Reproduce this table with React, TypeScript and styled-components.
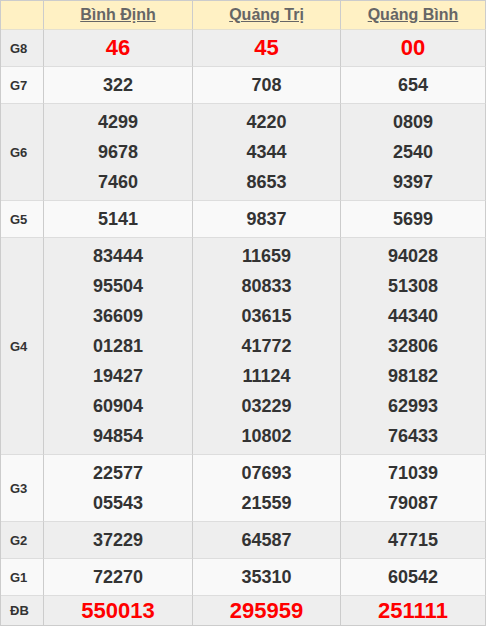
import React from 'react'
import styled, { createGlobalStyle } from 'styled-components'

const GlobalStyle = createGlobalStyle`
	html, body {
		margin: 0;
		padding: 0;
		background: #fff;
		font-family: "Liberation Sans", Arial, sans-serif;
	}
`

interface Prize {
	label: string
	big?: boolean
	last?: boolean
	values: string[][]
}

const provinces = ['Bình Định', 'Quảng Trị', 'Quảng Bình']

const prizes: Prize[] = [
	{ label: 'G8', big: true, values: [['46'], ['45'], ['00']] },
	{ label: 'G7', values: [['322'], ['708'], ['654']] },
	{
		label: 'G6',
		values: [
			['4299', '9678', '7460'],
			['4220', '4344', '8653'],
			['0809', '2540', '9397'],
		],
	},
	{ label: 'G5', values: [['5141'], ['9837'], ['5699']] },
	{
		label: 'G4',
		values: [
			['83444', '95504', '36609', '01281', '19427', '60904', '94854'],
			['11659', '80833', '03615', '41772', '11124', '03229', '10802'],
			['94028', '51308', '44340', '32806', '98182', '62993', '76433'],
		],
	},
	{
		label: 'G3',
		values: [
			['22577', '05543'],
			['07693', '21559'],
			['71039', '79087'],
		],
	},
	{ label: 'G2', values: [['37229'], ['64587'], ['47715']] },
	{ label: 'G1', values: [['72270'], ['35310'], ['60542']] },
	{ label: 'ĐB', big: true, last: true, values: [['550013'], ['295959'], ['251111']] },
]

const Table = styled.table`
	width: 486px;
	table-layout: fixed;
	border-collapse: separate;
	border-spacing: 0;
	border-top: 1px solid #ccc;
	border-left: 1px solid #ccc;
`

const HeadCell = styled.th`
	box-sizing: border-box;
	height: 29px;
	padding: 0;
	background: #fff1c4;
	border-right: 1px solid #ccc;
	border-bottom: 1px solid #e4e0d0;
	text-align: center;
	vertical-align: middle;
	line-height: 28px;
`

const ProvinceLink = styled.a`
	font-size: 16px;
	font-weight: bold;
	color: #666;
	text-decoration: underline;
`

const Row = styled.tr<{ $alt: boolean }>`
	background: ${p => (p.$alt ? '#eeeeee' : '#f9f9f9')};
`

const LabelCell = styled.td<{ $last?: boolean }>`
	box-sizing: border-box;
	padding: ${p => (p.$last ? '0' : '3px')} 0 ${p => (p.$last ? '0' : '3px')} 9px;
	border-right: 1px solid #ccc;
	border-bottom: 1px solid #ddd;
	font-size: 13px;
	font-weight: bold;
	color: #333;
	vertical-align: middle;
	${p => p.$last && 'border-bottom-color: #ccc;'}
`

const NumberCell = styled.td<{ $last?: boolean }>`
	box-sizing: border-box;
	padding: ${p => (p.$last ? '0' : '3px 0')};
	border-right: 1px solid #ccc;
	border-bottom: 1px solid ${p => (p.$last ? '#ccc' : '#ddd')};
	text-align: center;
	vertical-align: middle;
`

const Number = styled.div<{ $big?: boolean; $last?: boolean }>`
	height: ${p => (p.$last ? '29px' : '30px')};
	line-height: ${p => (p.$last ? '29px' : '30px')};
	font-size: ${p => (p.$big ? '22px' : '18px')};
	font-weight: bold;
	color: ${p => (p.$big ? '#f00' : '#333')};
`

export default function App() {
	return (
		<>
			<GlobalStyle />
			<Table>
				<colgroup>
					<col style={{ width: 43 }} />
					<col style={{ width: 149 }} />
					<col style={{ width: 148 }} />
					<col style={{ width: 145 }} />
				</colgroup>
				<thead>
					<tr>
						<HeadCell />
						{provinces.map(name => (
							<HeadCell key={name}>
								<ProvinceLink>{name}</ProvinceLink>
							</HeadCell>
						))}
					</tr>
				</thead>
				<tbody>
					{prizes.map((prize, i) => (
						<Row key={prize.label} $alt={i % 2 === 0}>
							<LabelCell $last={prize.last}>{prize.label}</LabelCell>
							{prize.values.map((list, j) => (
								<NumberCell key={j} $last={prize.last}>
									{list.map(n => (
										<Number key={n} $big={prize.big} $last={prize.last}>
											{n}
										</Number>
									))}
								</NumberCell>
							))}
						</Row>
					))}
				</tbody>
			</Table>
		</>
	)
}
